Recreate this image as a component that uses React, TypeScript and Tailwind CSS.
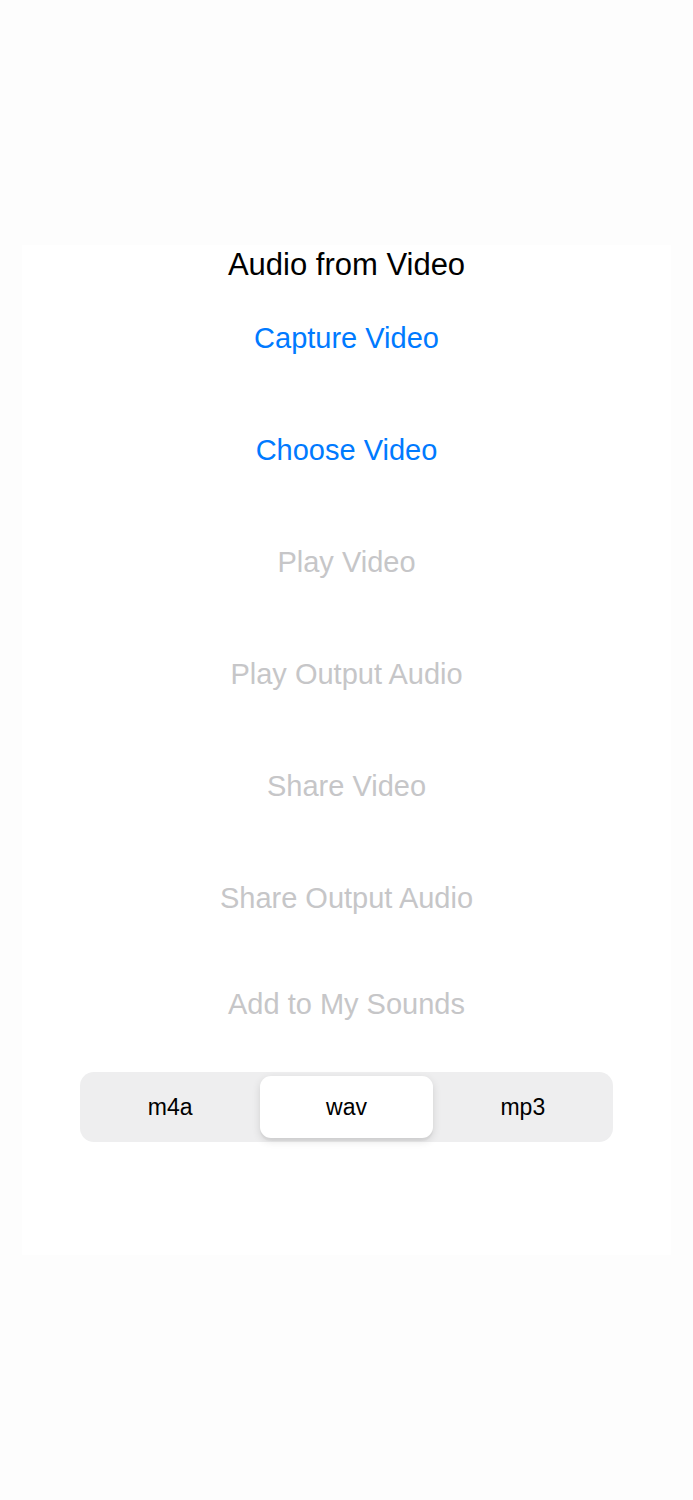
import { useState } from 'react';

const actions = [
    { label: 'Capture Video', enabled: true },
    { label: 'Choose Video', enabled: true },
    { label: 'Play Video', enabled: false },
    { label: 'Play Output Audio', enabled: false },
    { label: 'Share Video', enabled: false },
    { label: 'Share Output Audio', enabled: false },
];

const formats = ['m4a', 'wav', 'mp3'];

export default function App() {
    const [format, setFormat] = useState('wav');

    return (
        <div
            className="min-h-[1500px] w-full bg-[#fdfdfd] pt-[245px]"
            style={{ fontFamily: '"Liberation Sans", Arial, sans-serif' }}
        >
            <div className="mx-[22px] flex h-[1010px] flex-col items-center bg-white">
                <h1 className="mt-[2px] h-[36px] text-[31px] leading-[36px] text-black">Audio from Video</h1>

                {actions.map((a) => (
                    <button
                        key={a.label}
                        disabled={!a.enabled}
                        className={`flex h-[112px] items-center justify-center text-[29px] ${
                            a.enabled ? 'text-[#007aff]' : 'text-[#c6c6c8]'
                        }`}
                    >
                        {a.label}
                    </button>
                ))}
                <button disabled className="flex h-[100px] items-center justify-center text-[29px] text-[#c6c6c8]">
                    Add to My Sounds
                </button>

                <div className="mt-[17px] grid h-[70px] w-[533px] grid-cols-3 gap-[4px] rounded-[14px] bg-[#eeeeef] p-[4px]">
                    {formats.map((f) => (
                        <button
                            key={f}
                            onClick={() => setFormat(f)}
                            className={`rounded-[11px] text-[23px] text-black ${
                                format === f ? 'bg-white shadow-[0_3px_8px_rgba(0,0,0,0.12),0_3px_1px_rgba(0,0,0,0.04)]' : ''
                            }`}
                        >
                            {f}
                        </button>
                    ))}
                </div>
            </div>
        </div>
    );
}
